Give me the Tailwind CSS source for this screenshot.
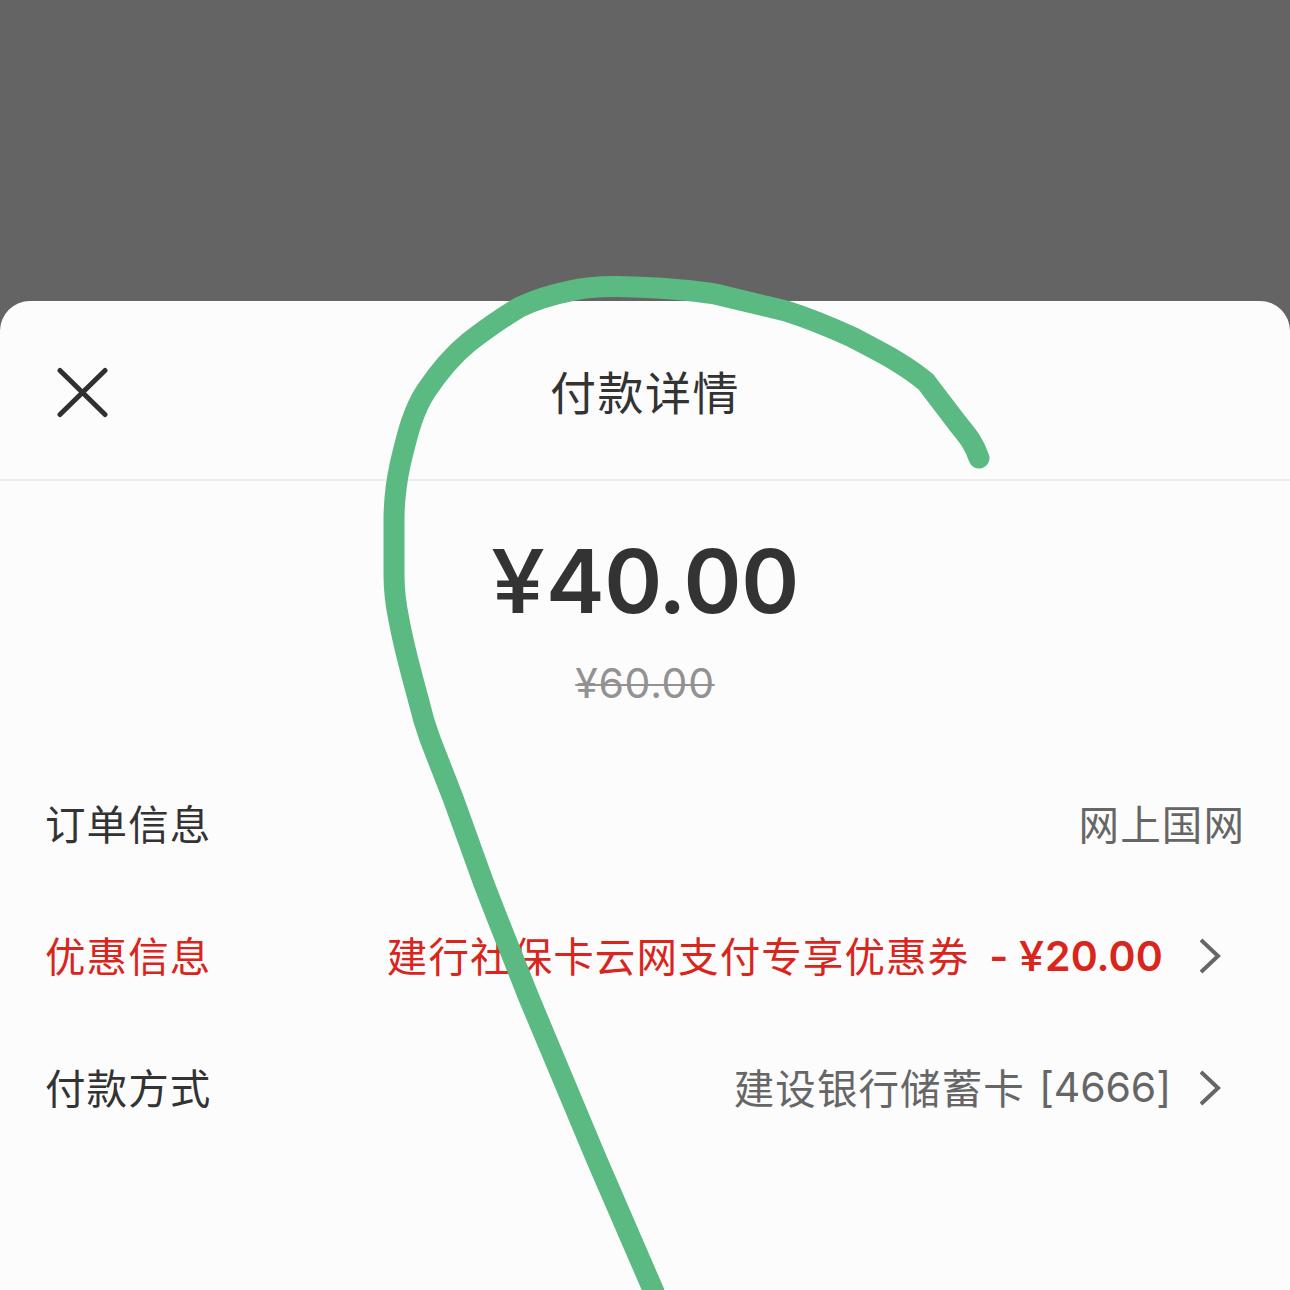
<!DOCTYPE html>
<html lang="zh-CN">
<head>
<meta charset="utf-8">
<title>付款详情</title>
<script src="https://cdn.jsdelivr.net/npm/@tailwindcss/browser@4"></script>
</head>
<body class="bg-[#646464]">
<main class="relative flex h-[1290px] w-[1290px] flex-col overflow-hidden bg-[#646464] pt-[301px] font-['Inter','Noto_Sans_CJK_SC',sans-serif] text-[#333]">
  <section class="flex flex-1 flex-col rounded-t-[30px] bg-[#fcfcfc]">
    <header class="grid h-[180px] grid-cols-[1fr_auto_1fr] items-center border-b-2 border-[#ededed] px-[56px] pt-[4px]">
      <svg class="h-[52px] w-[52px]" viewBox="0 0 52 52" fill="none" stroke="#303030" stroke-width="5" stroke-linecap="round"><path d="M4 4.500L49 48.500M49 4.500L4 48.500"/></svg>
      <h1 class="pt-[1px] text-[46px] leading-[60px] tracking-[1.500px]">付款详情</h1>
    </header>
    <div class="flex flex-col items-center pt-[44px]">
      <div class="flex text-[88px] leading-[112px] font-semibold"><span class="mr-[6px] inline-block origin-left scale-x-110 font-medium">¥</span><span class="tracking-[-0.300px]">4<span class="tracking-[-4px]">0</span>.00</span></div>
      <div class="mt-[21px] text-[41px] leading-[50px] tracking-[0.700px] text-[#929292] line-through decoration-2">¥60.00</div>
    </div>
    <dl class="mt-[50px] flex flex-col px-[45px] text-[40.500px] tracking-[1.100px]">
      <div class="flex h-[132px] items-center justify-between">
        <dt class="pt-[4px]">订单信息</dt>
        <dd class="pt-[4px] text-[#666]">网上国网</dd>
      </div>
      <div class="flex h-[132px] items-center justify-between text-[#d9251c]">
        <dt class="pt-[4px]">优惠信息</dt>
        <dd class="flex items-center pr-[23px]">
          <span class="pt-[4px]">建行社保卡云网支付专享优惠券</span>
          <span class="ml-[20px] flex pt-[1px] text-[41px] font-semibold tracking-[0.200px]"><span class="whitespace-pre">- </span><span class="mr-[3px] inline-block origin-left scale-x-110 font-medium">¥</span><span>2<span class="tracking-[-1.500px]">0</span>.00</span></span>
          <svg class="ml-[37px] h-[36px] w-[22px]" viewBox="0 0 22 36" fill="none" stroke="#666" stroke-width="4"><path d="M1 2L18 18L1 34"/></svg>
        </dd>
      </div>
      <div class="flex h-[132px] items-center justify-between">
        <dt class="pt-[4px]">付款方式</dt>
        <dd class="flex items-center pr-[23px] text-[#666]">
          <span class="pt-[4px]">建设银行储蓄卡</span>
          <span class="ml-[14px] text-[41px] tracking-[-0.100px]">[4666]</span>
          <svg class="ml-[29px] h-[36px] w-[22px]" viewBox="0 0 22 36" fill="none" stroke="#666" stroke-width="4"><path d="M1 2L18 18L1 34"/></svg>
        </dd>
      </div>
    </dl>
  </section>
  <svg class="pointer-events-none absolute inset-0 h-full w-full" viewBox="0 0 1290 1290" fill="none" stroke="#5aba82" stroke-width="21" stroke-linecap="round" stroke-linejoin="round">
    <path d="M979 458C974 443 967 435 958 424L926 382C904 363 876 350 852 337C830 327 808 318 786 311L715 294C690 290 662 288 634 287C611 286 590 286 570 291C550 295 535 300 520 307C503 317 486 329 469 342C452 356 438 373 426 391C412 412 406 440 400 465C396 484 394 500 394 520L394 575C394 592 396 606 399 620C404 648 411 672 419 702C422 715 426 728 430 739L453 798L484 884L498 920L529 998L560 1072L596 1158L654 1292"/>
  </svg>
</main>
</body>
</html>
